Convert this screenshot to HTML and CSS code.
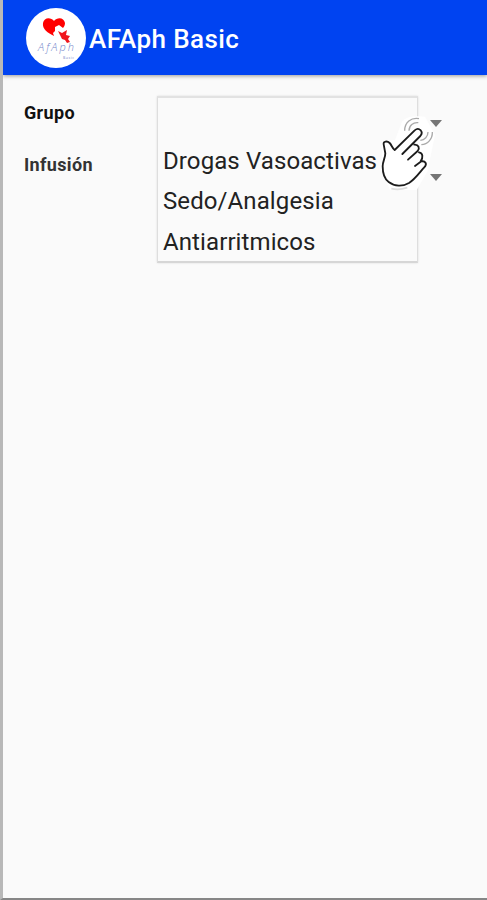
FILE: index.html
```html
<!DOCTYPE html>
<html lang="es">
<head>
  <meta charset="UTF-8" />
  <meta name="viewport" content="width=device-width, initial-scale=1.0"/>
  <title>AFAph Basic</title>
  <link rel="stylesheet" href="styles.css">
</head>
<body>

  <header class="app-bar">
    <svg class="logo" viewBox="0 0 60 60">
      <circle cx="30" cy="30" r="30" fill="#fff"/>
      <path d="M28 28 C22 25 16 21 17 15 C18 9 25 9 28 13 C31 9 38 9 39 15 C39 17 38 19 37 20 L33 17 L29 19 L29 23 L27 25 Z" fill="#f00"/>
      <path d="M32 23 L36 25 L41 22 L40 27 L44 28 L42 31 L44 34 L41 35 L39 32 L36 31 L34 27 Z" fill="#f0151c"/>
      <text x="12" y="43" textLength="36" class="logo-text">AfAph</text>
      <text x="37" y="50.5" textLength="11" class="logo-sub">Basic</text>
    </svg>
    <h1>AFAph Basic</h1>
  </header>

  <main class="form">
    <div class="labels">
      <label>Grupo</label>
      <label class="muted">Infusión</label>
    </div>

    <ul class="dropdown">
      <li></li>
      <li>Drogas Vasoactivas</li>
      <li>Sedo/Analgesia</li>
      <li>Antiarritmicos</li>
    </ul>

    <div class="arrows">
      <span class="arrow"></span>
      <span class="arrow"></span>
    </div>

    <!-- tap hint -->
    <svg class="hand" viewBox="0 0 270 360">
      <path class="hand-bg" d="M96 110 Q110 90 165 95 L195 150 L172 260 L140 315 H60 L35 260 L36 168 L75 165 Z"/>
      <path class="wave" d="M104 137 C104 112 123 97 147 101 M117 137 C117 121 130 111 145 113"/>
      <path class="wave" d="M187 141 C188 162 173 178 154 179 M174 141 C174 155 164 165 151 166"/>
      <path class="shade" d="M64 311 Q87 316 112 308"/>
      <path class="outline" d="M97 207 L151 153 C162 140 147 125 134 136 L74 195 C67 190 65 180 59 174 C52 167 39 168 41 178 L46 205 C46 218 38 229 38 244 C38 266 43 282 56 291 C74 305 98 305 117 294 C135 283 150 261 162 248 C174 236 165 227 154 229 L135 243 M133 179 C146 178 150 190 143 198 L114 224 M147 202 C159 204 160 217 152 229"/>
    </svg>
  </main>

</body>
</html>
```
FILE: styles.css
```css
* {
  box-sizing: border-box;
}

body {
  margin: 0;
  height: 900px;
  font-family: Roboto, sans-serif;
  background: #fafafa;
  border-left: 3px solid #b8b8b8;
  border-bottom: 2px solid #868686;
  overflow: hidden;
}

.app-bar {
  display: flex;
  align-items: center;
  gap: 3px;
  height: 75px;
  padding: 0 0 0 23px;
  background: #0043f1;
  box-shadow: 0 1px 4px rgba(0,0,0,0.4);
}

.app-bar h1 {
  margin: 2px 0 0;
  color: #fff;
  font-size: 26px;
  font-weight: 500;
  letter-spacing: 0.4px;
}

.logo {
  width: 60px;
  height: 60px;
}

.logo-text {
  font-family: "Open Sans", sans-serif;
  font-size: 11px;
  font-style: italic;
  font-weight: 300;
  fill: #7183c9;
}

.logo-sub {
  font-family: "Open Sans", sans-serif;
  font-size: 3.5px;
  fill: #7183c9;
}

.form {
  position: relative;
  display: flex;
  align-items: flex-start;
  padding: 21px 0 0 21px;
}

.labels {
  width: 133px;
  padding-top: 6px;
}

.labels label {
  display: block;
  height: 52px;
  font-size: 18px;
  line-height: 22px;
  font-weight: 700;
  letter-spacing: 0.35px;
  color: #111;
}

.labels .muted {
  color: #333;
}

.dropdown {
  width: 261px;
  height: 167px;
  margin: 0;
  padding: 2px 0 0 5px;
  list-style: none;
  border: 1px solid #dedede;
  border-top: 2px solid #e2e2e2;
  border-bottom: 2px solid #d6d6d6;
  box-shadow: 0 0 2px rgba(0,0,0,0.12);
}

.dropdown li {
  height: 40.7px;
  font-size: 24px;
  line-height: 41px;
  letter-spacing: 0.1px;
  white-space: nowrap;
  color: #222;
}

.arrows {
  display: flex;
  flex-direction: column;
  gap: 47px;
  padding: 24px 0 0 12px;
}

.arrow {
  border-left: 6px solid transparent;
  border-right: 6px solid transparent;
  border-top: 7px solid #757575;
}

.hand {
  position: absolute;
  left: 367px;
  top: 10px;
  width: 90px;
  height: 120px;
}

.hand-bg {
  fill: #fff;
}

.wave {
  fill: none;
  stroke: #aaa;
  stroke-width: 4;
}

.shade {
  fill: none;
  stroke: #ddd;
  stroke-width: 5;
}

.outline {
  fill: #fff;
  stroke: #1c1c1c;
  stroke-width: 5.5;
  stroke-linecap: round;
  stroke-linejoin: round;
}
```
